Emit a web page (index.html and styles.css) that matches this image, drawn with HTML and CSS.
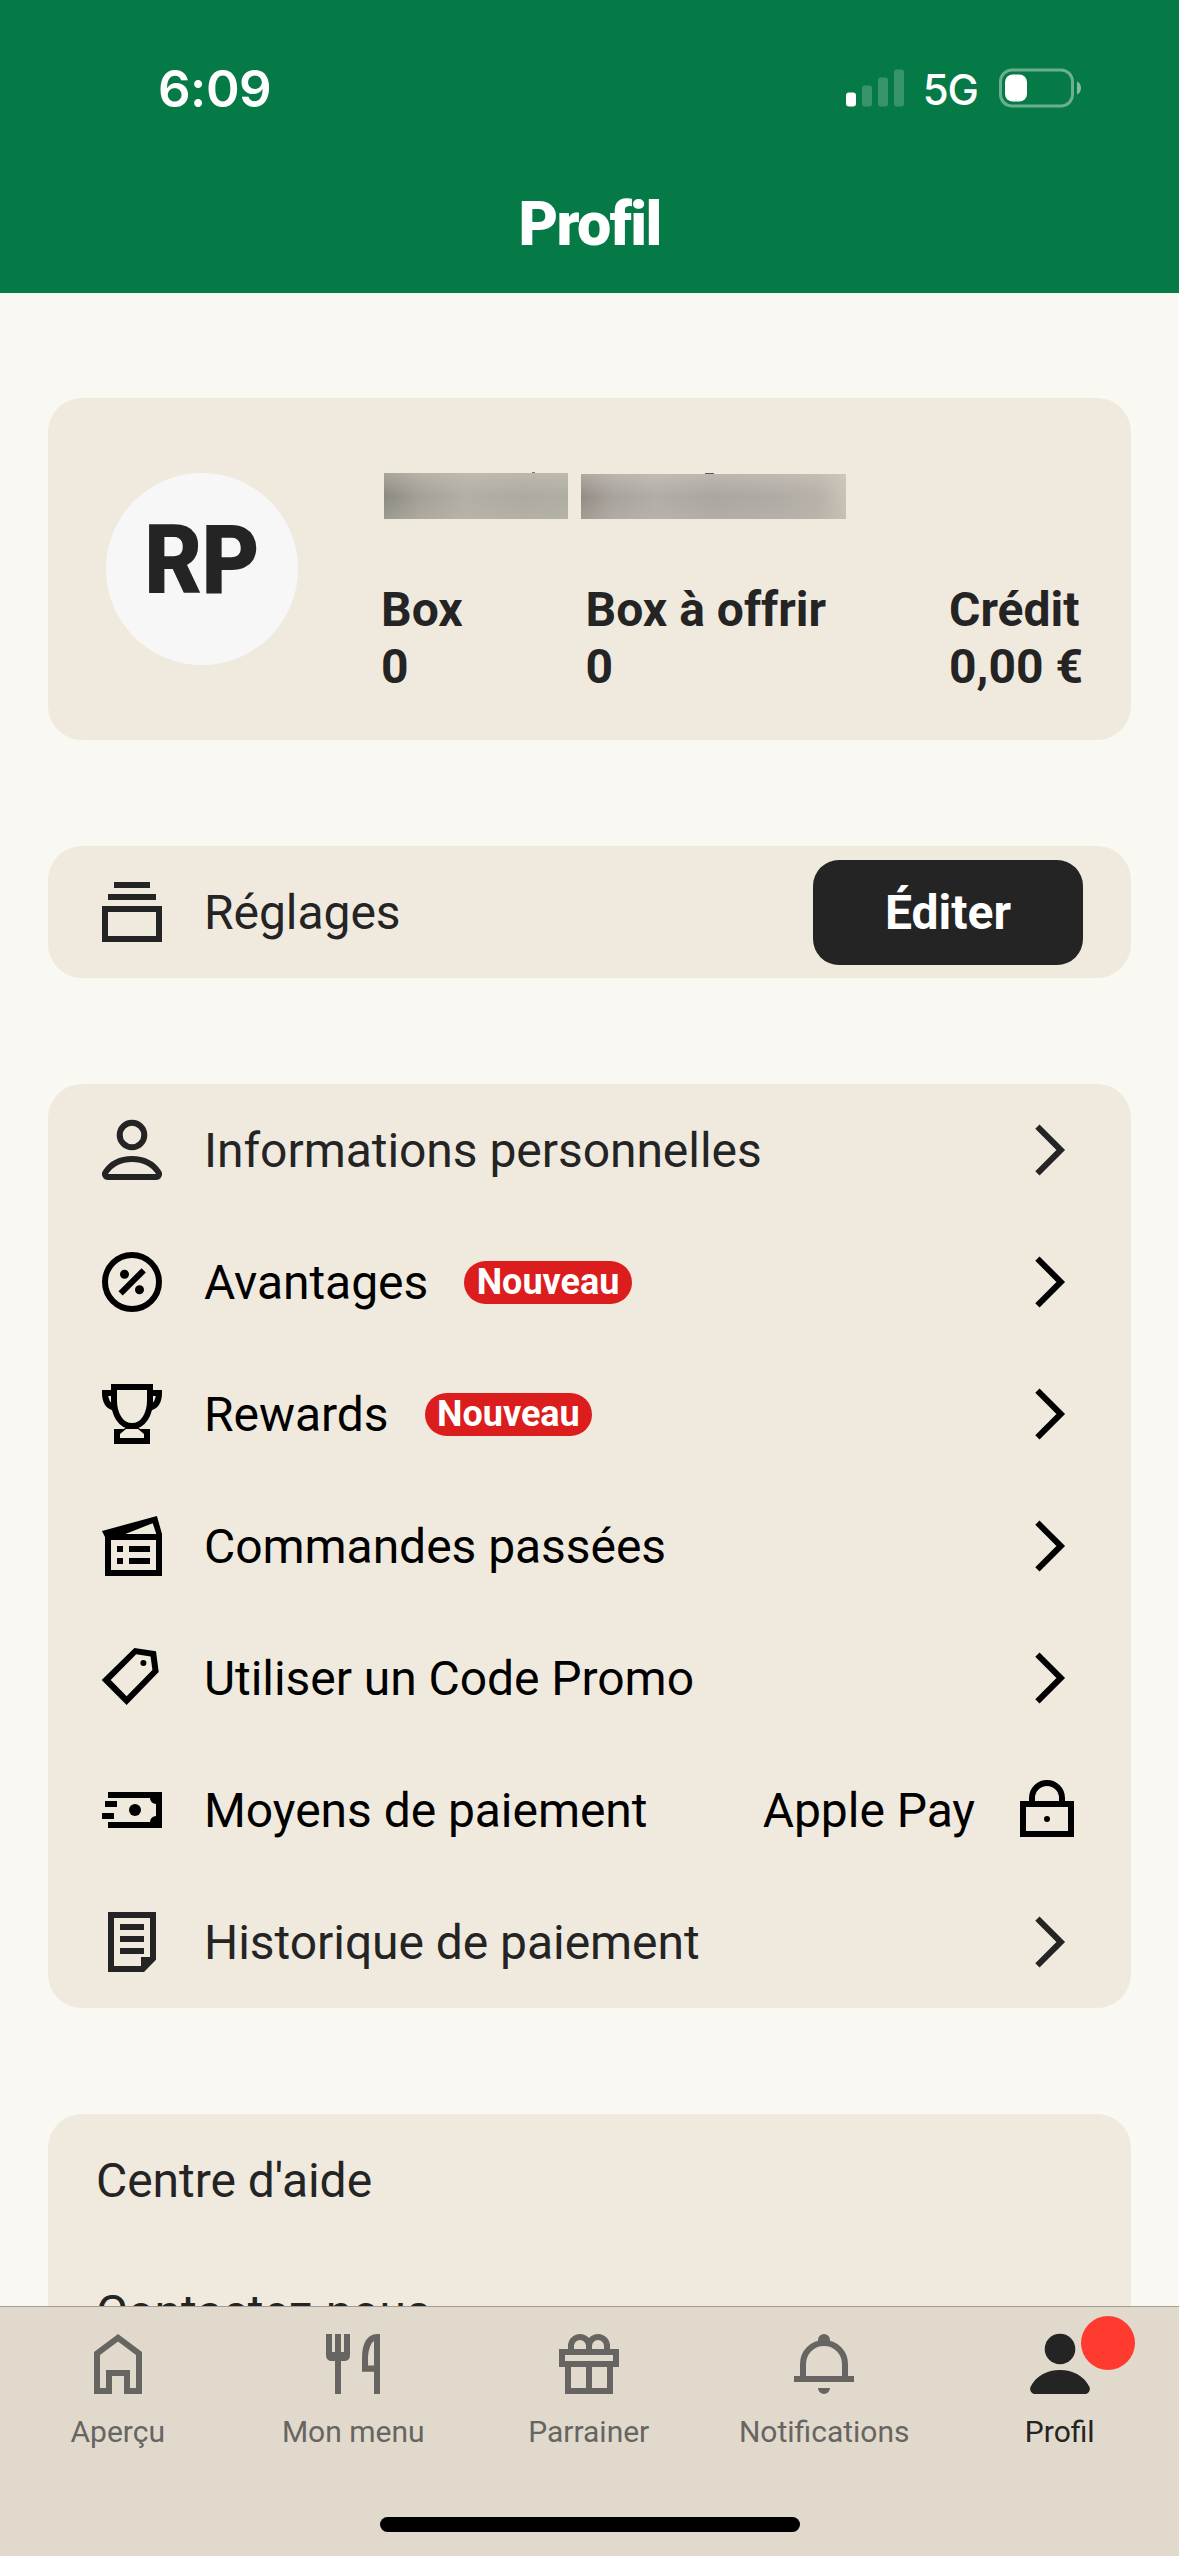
FILE: index.html
```html
<!DOCTYPE html>
<html lang="fr">
<head>
<meta charset="utf-8">
<title>Profil</title>
<link rel="stylesheet" href="styles.css">
</head>
<body>
<svg class="defs" width="0" height="0" aria-hidden="true">
  <symbol id="chevron" viewBox="0 0 72 72"><path d="M26.400 12.700L49.800 36L26.400 59.300" fill="none" stroke="currentColor" stroke-width="6"/></symbol>
</svg>
<div class="screen">
  <header class="header">
    <div class="status">
      <span class="time">6:09</span>
      <div class="status-right">
        <svg class="signal" width="58" height="38" viewBox="0 0 58 38" fill="#fff">
          <rect x="0" y="23.500" width="10" height="14" rx="3"/>
          <g opacity=".2"><rect x="16" y="16.500" width="10" height="21" rx="3"/><rect x="32" y="8.500" width="10" height="29" rx="3"/><rect x="48" y="0.500" width="10" height="37" rx="3"/></g>
        </svg>
        <span class="network">5G</span>
        <svg class="battery" width="84" height="40" viewBox="0 0 84 40">
          <rect x="1.500" y="2" width="72" height="36" rx="11.500" fill="none" stroke="#fff" stroke-opacity=".4" stroke-width="3"/>
          <rect x="6" y="6.500" width="22" height="27" rx="7.500" fill="#fff"/>
          <path d="M78 13.500C80.500 14.500 82 17 82 20S80.500 25.500 78 26.500Z" fill="#fff" opacity=".5"/>
        </svg>
      </div>
    </div>
    <h1 class="title">Profil</h1>
  </header>

  <main class="content">
    <section class="card profile">
      <div class="avatar"><span class="initials">RP</span></div>
      <div class="details">
        <div class="name"><span class="mask mask-first"></span><span class="mask mask-last"></span></div>
        <dl class="stats">
          <div><dt>Box</dt><dd>0</dd></div>
          <div><dt>Box à offrir</dt><dd>0</dd></div>
          <div><dt>Crédit</dt><dd>0,00 €</dd></div>
        </dl>
      </div>
    </section>

    <section class="card">
      <div class="row soft">
        <svg class="icon" viewBox="0 0 24 24"><path d="M6 2H18V4H6ZM4 6H20V8H4Z"/><path class="line" d="M3 11H21V21H3Z"/></svg>
        <span>Réglages</span>
        <button class="edit">Éditer</button>
      </div>
    </section>

    <section class="card">
      <div class="row soft">
        <svg class="icon" viewBox="0 0 24 24"><g class="line"><circle cx="12" cy="7" r="4.100"/><path d="M4 21H20A1 1 0 0 0 20.800 19.400C19 16.700 15.800 15 12 15S5 16.700 3.200 19.400A1 1 0 0 0 4 21Z"/></g></svg>
        <span>Informations personnelles</span>
        <svg class="icon end"><use href="#chevron"/></svg>
      </div>
      <div class="row">
        <svg class="icon" viewBox="0 0 24 24"><circle class="line" cx="12" cy="12" r="9"/><path class="line" d="M8.200 15.800L15.900 8.100"/><circle cx="9.500" cy="9.400" r="1.500"/><circle cx="14.500" cy="14.600" r="1.500"/></svg>
        <span>Avantages</span><span class="badge">Nouveau</span>
        <svg class="icon end"><use href="#chevron"/></svg>
      </div>
      <div class="row">
        <svg class="icon" viewBox="0 0 24 24"><path class="line" d="M6 3H18V7.500C18 12 15.800 16 12 16S6 12 6 7.500ZM6 5H3C3 7.500 4 9.300 6 9.900M18 5H21C21 7.500 20 9.300 18 9.900"/><path fill-rule="evenodd" d="M6 17H9.300L10.500 16H13.500L14.700 17H18V22H6ZM8 20H16V18.700L14 17H10L8 18.700Z"/></svg>
        <span>Rewards</span><span class="badge">Nouveau</span>
        <svg class="icon end"><use href="#chevron"/></svg>
      </div>
      <div class="row">
        <svg class="icon" viewBox="0 0 24 24"><path class="line" d="M4 9H21V21H4Z"/><path fill-rule="evenodd" d="M2 7L20.300 2L22 8V9H3ZM9.800 8H20.100L18.900 4.400Z"/><path d="M7 12H9V14H7ZM11 12H18V14H11ZM7 16H9V18H7ZM11 16H18V18H11Z"/></svg>
        <span>Commandes passées</span>
        <svg class="icon end"><use href="#chevron"/></svg>
      </div>
      <div class="row">
        <svg class="icon" viewBox="0 0 24 24"><path fill-rule="evenodd" d="M12.800 2L20 3.100L20.900 10L10.200 21L1.900 12.700ZM13.400 4.100L4.900 12.700L10.200 18.100L18.800 9.300L18.200 4.800Z"/><circle cx="15.800" cy="7" r="1"/></svg>
        <span>Utiliser un Code Promo</span>
        <svg class="icon end"><use href="#chevron"/></svg>
      </div>
      <div class="row">
        <svg class="icon" viewBox="0 0 24 24"><path d="M4 6H22V18H4V16H18A2 2 0 0 1 20 14V10A2 2 0 0 1 18 8H4ZM3 9H7V11H3ZM2 13H6V15H2Z"/><circle cx="13" cy="12" r="2"/></svg>
        <span>Moyens de paiement</span>
        <span class="value">Apple Pay</span>
        <svg class="icon" viewBox="0 0 24 24"><path class="line" d="M4 10H20V20H4ZM7 9V8A5 5 0 0 1 17 8V9"/><circle cx="12" cy="15" r="1"/></svg>
      </div>
      <div class="row soft">
        <svg class="icon" viewBox="0 0 24 24"><path fill-rule="evenodd" d="M4 2H20V17.900L16 22H4ZM6 4V20H15V17H18V4Z"/><path d="M8 6H16V8H8ZM8 10H16V12H8ZM8 14H16V16H8Z"/></svg>
        <span>Historique de paiement</span>
        <svg class="icon end"><use href="#chevron"/></svg>
      </div>
    </section>

    <section class="card">
      <div class="row soft"><span>Centre d'aide</span></div>
      <div class="row soft"><span>Contactez-nous</span></div>
    </section>
  </main>

  <nav class="tabbar">
    <div class="tabs">
      <a class="tab"><svg class="icon" viewBox="0 0 24 24"><path fill-rule="evenodd" d="M12 2L20 8V22H14V16H10V22H4V8ZM12 4.500L6 9V20H8V14H16V20H18V9Z"/></svg><span>Aperçu</span></a>
      <a class="tab"><svg class="icon" viewBox="0 0 24 24"><path d="M3 2H5V8H6V2H8V8H9V2H11V9.200A1.800 1.800 0 0 1 9.200 11H8V22H6V11H4.800A1.800 1.800 0 0 1 3 9.200Z"/><path fill-rule="evenodd" d="M21 2V22H19V14.600H15V10C15 5 16.800 2 20 2ZM17 12.500H19V4.300C17.600 5.300 17 8 17 10.500Z"/></svg><span>Mon menu</span></a>
      <a class="tab"><svg class="icon" viewBox="0 0 24 24"><path class="line" d="M3 8H21V12H3ZM5 12V21H19V12M12 12V21M6 8V6A3 3 0 0 1 12 6V8M12 8V6A3 3 0 0 1 18 6V8"/></svg><span>Parrainer</span></a>
      <a class="tab"><svg class="icon" viewBox="0 0 24 24"><path class="line" d="M5 17V12A7 7 0 0 1 19 12V17M2 17H22"/><path d="M10 5V4A2 2 0 0 1 14 4V5ZM10 20H14A2 2 0 0 1 10 20Z"/></svg><span>Notifications</span></a>
      <a class="tab active"><svg class="icon" viewBox="0 0 24 24"><circle cx="12" cy="7" r="5.100"/><path d="M3.800 22H20.200A1.700 1.700 0 0 0 21.800 19.600C20 16 16.300 14 12 14S4 16 2.200 19.600A1.700 1.700 0 0 0 3.800 22Z"/></svg><i class="dot"></i><span>Profil</span></a>
    </div>
    <div class="home-indicator"></div>
  </nav>
</div>
</body>
</html>
```
FILE: styles.css
```css
* { box-sizing: border-box; margin: 0; padding: 0; }

body {
  font-family: Roboto, "Liberation Sans", sans-serif;
  font-size: 48px;
  color: #000;
  background: #f9f8f3;
}

.defs { position: absolute; }

.screen {
  display: flex;
  flex-direction: column;
  width: 1179px;
  height: 2556px;
  overflow: hidden;
}

/* Header */
.header {
  flex: none;
  height: 293px;
  color: #fff;
  background: #067a46;
}

.status {
  display: flex;
  justify-content: space-between;
  align-items: center;
  height: 176px;
  padding: 0 96px 0 158px;
  font-family: Inter, "Liberation Sans", sans-serif;
}

.time { font-size: 51px; font-weight: 600; letter-spacing: -.5px; }
.status-right { display: flex; align-items: center; }
.network { margin: 2px 21px 0 19px; font-size: 42px; font-weight: 500; letter-spacing: -1px; }
.signal, .battery { display: block; }

.title {
  font-size: 61px;
  font-weight: 900;
  line-height: 97px;
  letter-spacing: -1.6px;
  text-align: center;
}

/* Cards */
.content {
  flex: 1;
  min-height: 0;
  display: flex;
  flex-direction: column;
  gap: 106px;
  padding: 105px 48px 0;
  overflow: hidden;
}

.card {
  flex: none;
  border-radius: 34px;
  background: #f0eade;
}

.profile {
  display: flex;
  height: 342px;
  padding: 75px 48px 0 58px;
  color: #242424;
}

.avatar {
  flex: none;
  width: 192px;
  height: 192px;
  margin-right: 83px;
  border-radius: 50%;
  background: #f7f7f7;
  font-size: 96px;
  font-weight: 900;
  line-height: 174px;
  text-align: center;
}

.initials { display: inline-block; letter-spacing: -1px; transform: scaleX(.93); }

.details { flex: 1; }
.name { display: flex; align-items: flex-end; gap: 13px; height: 46px; padding-left: 3px; }
.mask { position: relative; height: 46px; }
.mask-first {
  width: 184px;
  background:
    linear-gradient(rgba(205, 200, 188, .45), rgba(170, 166, 158, 0) 50%, rgba(190, 186, 172, .35)),
    linear-gradient(90deg, #8b8981, #a5a199 20%, #b3afa6 45%, #aeaaa1 75%, #b0ada2);
}
.mask-last {
  width: 265px;
  height: 45px;
  background:
    linear-gradient(rgba(210, 204, 195, .45), rgba(170, 166, 158, 0) 50%, rgba(190, 186, 176, .35)),
    linear-gradient(90deg, #948b85, #a8a39c 12%, #b2ada6 28%, #aba69f 50%, #b0aba4 75%, #b8b1a8 90%, #cbc2b7);
}
.mask::before {
  content: "";
  position: absolute;
  top: -1px;
  left: 148px;
  width: 3px;
  height: 1px;
  background: #77756e;
}
.mask-last::before { left: 124px; width: 9px; background: #5c5a56; }

.stats {
  display: flex;
  justify-content: space-between;
  margin-top: 62px;
  font-weight: 700;
  line-height: 57px;
}

/* Rows */
.row {
  display: flex;
  align-items: center;
  gap: 36px;
  height: 132px;
  padding: 0 48px;
  letter-spacing: -.05px;
}

.soft { color: #242424; }

.icon {
  flex: none;
  display: block;
  width: 72px;
  height: 72px;
  fill: currentColor;
}

.line { fill: none; stroke: currentColor; stroke-width: 2; }
.end, .edit, .value { margin-left: auto; }

.edit {
  width: 270px;
  height: 105px;
  margin-top: 1px;
  border: 0;
  border-radius: 26px;
  font: 700 48px Roboto, "Liberation Sans", sans-serif;
  color: #fff;
  background: #242424;
}

.badge {
  height: 43px;
  padding: 0 12.5px;
  border-radius: 22px;
  font-size: 36px;
  font-weight: 700;
  line-height: 43px;
  letter-spacing: 0;
  color: #fff;
  background: #dc1d1d;
}

/* Tab bar */
.tabbar {
  flex: none;
  height: 250px;
  border-top: 1px solid #a39d92;
  background: #e1d9cb;
}

.tabs { display: flex; height: 210px; padding: 21px 1.5px 0 0; }

.tab {
  position: relative;
  flex: 1;
  display: flex;
  flex-direction: column;
  align-items: center;
  gap: 14px;
  font-size: 30px;
  line-height: 35px;
  color: #666562;
}

.active { color: #242424; }

.dot {
  position: absolute;
  top: -12px;
  left: calc(50% + 21px);
  width: 54px;
  height: 54px;
  border-radius: 50%;
  background: #ff3b30;
}

.home-indicator {
  width: 420px;
  height: 15px;
  margin: 0 auto;
  border-radius: 8px;
  background: #000;
}
```
